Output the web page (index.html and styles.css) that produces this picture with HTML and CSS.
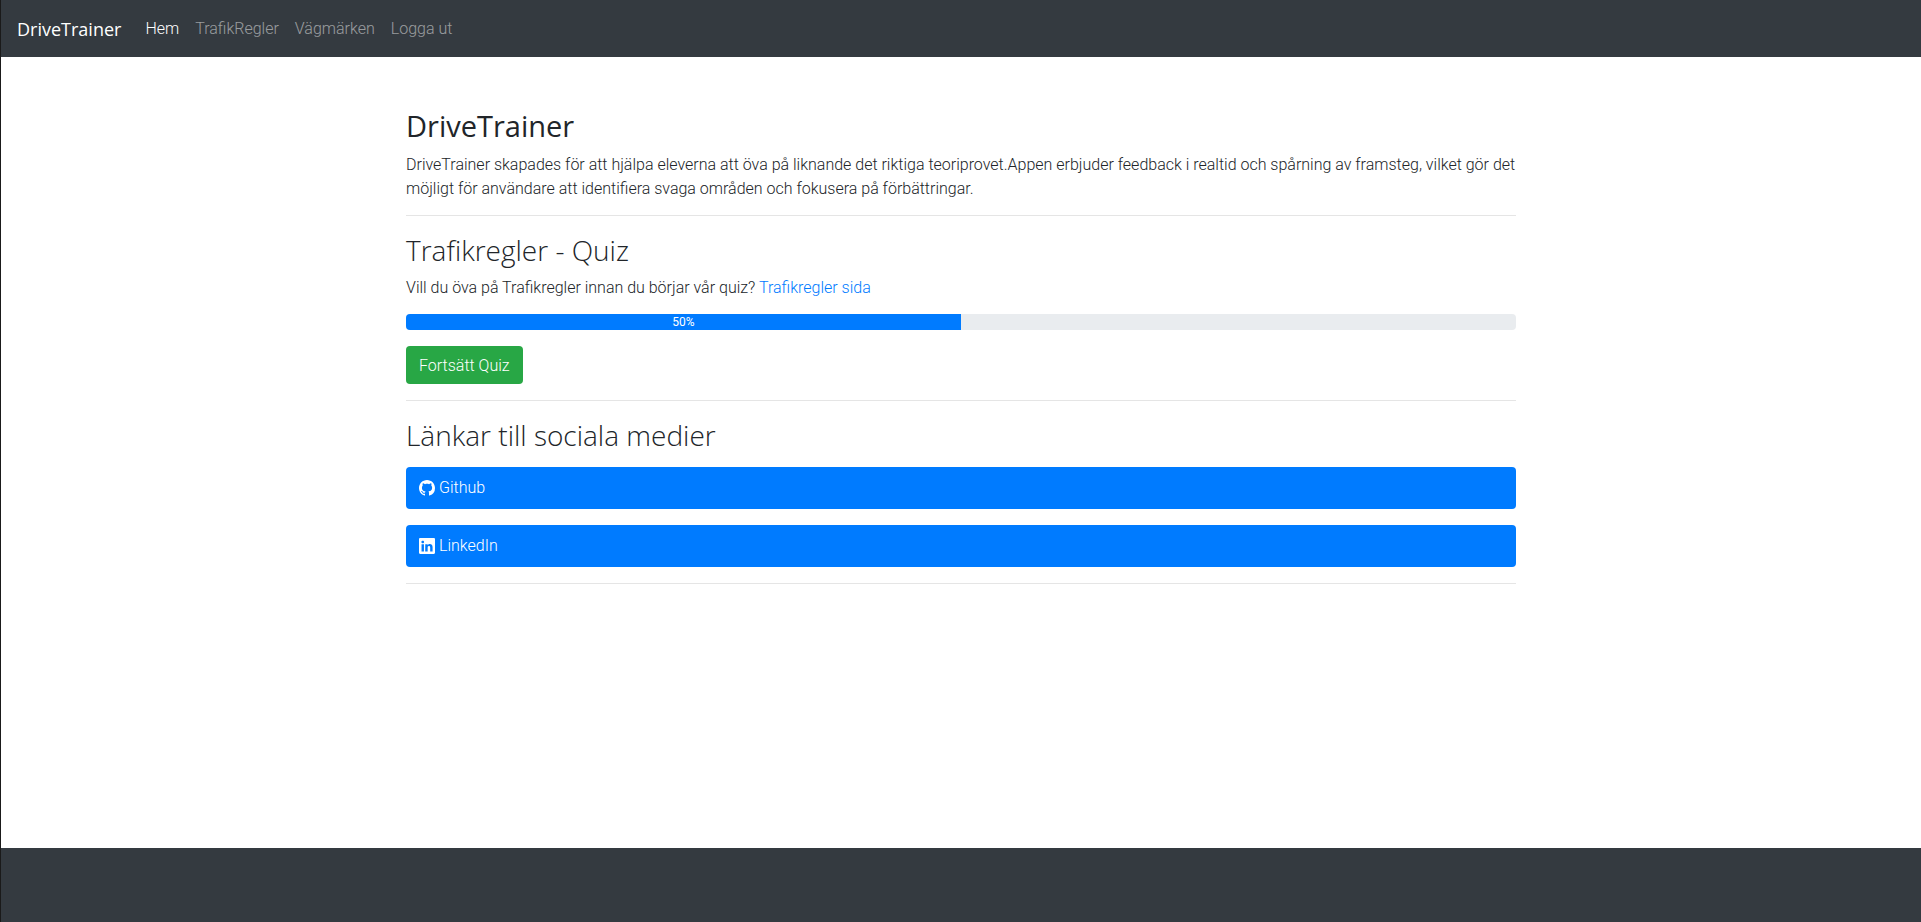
FILE: index.html
```html
<!DOCTYPE html>
<html lang="sv">
<head>
<meta charset="utf-8">
<meta name="viewport" content="width=device-width, initial-scale=1">
<title>DriveTrainer</title>
<link rel="stylesheet" href="styles.css">
</head>
<body>
<nav class="navbar">
  <a class="brand" href="#">DriveTrainer</a>
  <ul class="nav-list">
    <li><a class="nav-link active" href="#">Hem</a></li>
    <li><a class="nav-link" href="#">TrafikRegler</a></li>
    <li><a class="nav-link" href="#">Vägmärken</a></li>
    <li><button class="nav-link" type="button">Logga ut</button></li>
  </ul>
</nav>
<main class="container">
  <section>
    <h1 class="title">DriveTrainer</h1>
    <p class="text">DriveTrainer skapades för att hjälpa eleverna att öva på liknande det riktiga teoriprovet.Appen erbjuder feedback i realtid och spårning av framsteg, vilket gör det möjligt för användare att identifiera svaga områden och fokusera på förbättringar.</p>
  </section>
  <hr class="divider">
  <section>
    <h2 class="subtitle">Trafikregler - Quiz</h2>
    <p class="text">Vill du öva på Trafikregler innan du börjar vår quiz? <a class="link" href="#">Trafikregler sida</a></p>
    <div class="progress" role="progressbar" aria-label="Quiz" aria-valuenow="50" aria-valuemin="0" aria-valuemax="100">
      <div class="progress-bar" style="width: 50%">50%</div>
    </div>
    <button class="btn btn-success" type="button">Fortsätt Quiz</button>
  </section>
  <hr class="divider">
  <section>
    <h2 class="subtitle">Länkar till sociala medier</h2>
    <ul class="social">
      <li><a class="btn btn-primary" href="#">
        <svg class="icon" viewBox="0 0 16 16" aria-hidden="true"><path d="M8 0C3.58 0 0 3.58 0 8c0 3.54 2.29 6.53 5.47 7.59.4.07.55-.17.55-.38 0-.19-.01-.82-.01-1.49-2.01.37-2.53-.49-2.69-.94-.09-.23-.48-.94-.82-1.13-.28-.15-.68-.52-.01-.53.63-.01 1.08.58 1.23.82.72 1.21 1.87.87 2.33.66.07-.52.28-.87.51-1.07-1.78-.2-3.64-.89-3.64-3.95 0-.87.31-1.59.82-2.15-.08-.2-.36-1.02.08-2.12 0 0 .67-.21 2.2.82.64-.18 1.32-.27 2-.27s1.36.09 2 .27c1.53-1.04 2.2-.82 2.2-.82.44 1.1.16 1.92.08 2.12.51.56.82 1.27.82 2.15 0 3.07-1.87 3.75-3.65 3.95.29.25.54.73.54 1.48 0 1.07-.01 1.93-.01 2.2 0 .21.15.46.55.38A8.01 8.01 0 0 0 16 8c0-4.42-3.58-8-8-8"/></svg>
        <span>Github</span></a></li>
      <li><a class="btn btn-primary" href="#">
        <svg class="icon" viewBox="0 0 16 16" aria-hidden="true"><path d="M0 1.146C0 .513.526 0 1.175 0h13.65C15.474 0 16 .513 16 1.146v13.708c0 .633-.526 1.146-1.175 1.146H1.175C.526 16 0 15.487 0 14.854zm4.943 12.248V6.169H2.542v7.225zm-1.2-8.212c.837 0 1.358-.554 1.358-1.248-.015-.709-.52-1.248-1.342-1.248S2.4 3.226 2.4 3.934c0 .694.521 1.248 1.327 1.248zm4.908 8.212V9.359c0-.216.016-.432.08-.586.173-.431.568-.878 1.232-.878.869 0 1.216.662 1.216 1.634v3.865h2.401V9.25c0-2.22-1.184-3.252-2.764-3.252-1.274 0-1.845.7-2.165 1.193v.025h-.016l.016-.025V6.169h-2.4c.03.678 0 7.225 0 7.225z"/></svg>
        <span>LinkedIn</span></a></li>
    </ul>
  </section>
  <hr class="divider">
</main>
<footer class="footer"></footer>
</body>
</html>
```

FILE: styles.css
```css
*, *::before, *::after { box-sizing: border-box; }

body {
  margin: 0;
  min-height: 100vh;
  display: flex;
  flex-direction: column;
  border-left: 1px solid #1a1a1a;
  background: #fff;
  color: #212529;
  font-family: Roboto, "Open Sans", sans-serif;
  font-size: 16px;
  font-weight: 300;
  line-height: 24px;
}

a { text-decoration: none; }
ul { list-style: none; margin: 0; padding: 0; }

.navbar {
  display: flex;
  align-items: center;
  gap: 16px;
  padding: 8px 16px;
  background: #343a40;
}
.brand, .title, .subtitle { font-family: "Open Sans", "Noto Sans", sans-serif; }
.brand {
  padding: 6px 0 4px;
  color: #fff;
  font-size: 18px;
  font-weight: 400;
  line-height: 31px;
}
.nav-list { display: flex; }
.nav-link {
  display: block;
  padding: 8px;
  border: 0;
  background: none;
  color: rgba(255, 255, 255, .5);
  font: inherit;
  cursor: pointer;
}
.nav-link.active { color: #fff; }

.container {
  flex: 1;
  width: 100%;
  max-width: 1140px;
  margin: 0 auto;
  padding: 48px 15px 0;
}
.title, .subtitle { margin: 0 0 8px; }
.title { padding-top: 2px; font-size: 29px; font-weight: 400; line-height: 38px; }
.subtitle { font-size: 28px; font-weight: 300; line-height: 36px; }
.text { margin: 0 0 14px; }
.link { color: #007bff; }
.divider {
  margin: 14px 0 16px;
  border: 0;
  border-top: 1px solid rgba(0, 0, 0, .1);
}

.progress {
  display: flex;
  height: 16px;
  margin-bottom: 16px;
  overflow: hidden;
  border-radius: 4px;
  background: #e9ecef;
}
.progress-bar {
  background: #007bff;
  color: #fff;
  font-size: 12px;
  font-weight: 400;
  line-height: 16px;
  text-align: center;
}

.btn {
  border: 1px solid transparent;
  border-radius: 4px;
  color: #fff;
  font: inherit;
  cursor: pointer;
}
.btn-success {
  display: block;
  margin-bottom: 16px;
  padding: 7px 12px 5px;
  background: #28a745;
}
.btn-primary {
  display: flex;
  align-items: center;
  gap: 4px;
  padding: 8px 12px;
  background: #007bff;
}
.social {
  display: grid;
  gap: 16px;
  margin-bottom: 16px;
  padding-top: 6px;
}
.icon { width: 16px; height: 16px; fill: currentColor; }

.footer { height: 74px; background: #343a40; }
```
